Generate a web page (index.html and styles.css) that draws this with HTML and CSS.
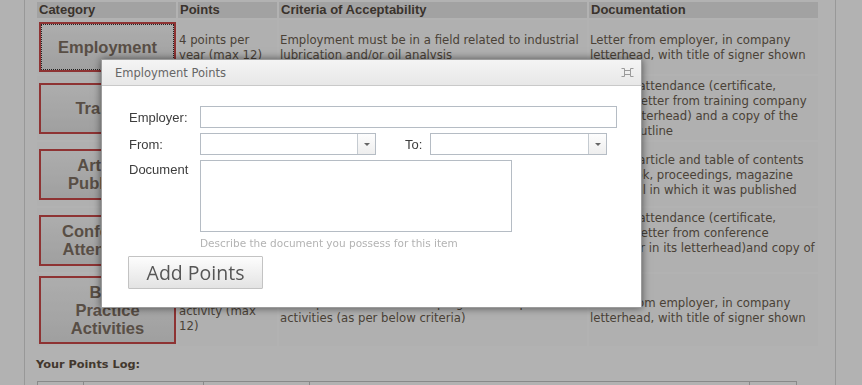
FILE: index.html
```html
<!DOCTYPE html>
<html lang="en">
<head>
    <meta charset="UTF-8">
    <meta name="viewport" content="width=device-width, initial-scale=1.0">
    <title>Certification Points</title>
    <link rel="stylesheet" href="styles.css">
</head>
<body>
    <div class="page">
        <table class="points">
            <tr>
                <th class="col-cat">Category</th>
                <th class="col-pts">Points</th>
                <th class="col-crit">Criteria of Acceptability</th>
                <th class="col-doc">Documentation</th>
            </tr>
            <tr>
                <td><button class="cat focused">Employment</button></td>
                <td>4 points per year (max 12)</td>
                <td>Employment must be in a field related to industrial lubrication and/or oil analysis</td>
                <td>Letter from employer, in company letterhead, with title of signer shown</td>
            </tr>
            <tr>
                <td><button class="cat">Training</button></td>
                <td>1 point per 8 hours (max 12)</td>
                <td>Training must be related to lubrication and/or oil analysis</td>
                <td>Proof of attendance (certificate,<br>original letter from training company<br>(in its letterhead) and a copy of the<br>course outline</td>
            </tr>
            <tr>
                <td><button class="cat">Articles Published</button></td>
                <td>2 points per article (max 8)</td>
                <td>Article must be related to lubrication and/or oil analysis and published in a recognized book, conference proceedings, magazine or technical journal</td>
                <td>Copy of article and table of contents<br>from book, proceedings, magazine<br>or journal in which it was published</td>
            </tr>
            <tr>
                <td><button class="cat">Conference Attendance</button></td>
                <td>1 point per day (max 8)</td>
                <td>Conference must be related to lubrication and/or oil analysis, or to machinery maintenance and reliability</td>
                <td>Proof of attendance (certificate,<br>original letter from conference<br>organizer in its letterhead)and copy of<br>agenda.</td>
            </tr>
            <tr>
                <td><button class="cat">Best Practice Activities</button></td>
                <td>2 points per activity (max 12)</td>
                <td>Participation in lubrication program best practice<br>activities (as per below criteria)</td>
                <td>Letter from employer, in company letterhead, with title of signer shown</td>
            </tr>
        </table>

        <h4 class="log-title">Your Points Log:</h4>
        <table class="log">
            <tr>
                <th class="log-n">#</th>
                <th class="log-cat">Category</th>
                <th class="log-date">Date</th>
                <th class="log-desc">Description</th>
                <th class="log-pts">Pts</th>
            </tr>
        </table>
    </div>

    <div class="mask"></div>

    <div class="dialog">
        <div class="dialog-head">
            <span class="dialog-title">Employment Points</span>
            <svg class="dialog-close" width="13" height="9" viewBox="0 0 13 9">
                <rect x="3.5" y="2.5" width="6" height="4" fill="none" stroke="#9a9a9a"/>
                <path d="M0.5 0.5h3v2 M12.5 0.5h-3v2 M0.5 8.5h3v-2 M12.5 8.5h-3v-2" fill="none" stroke="#9a9a9a"/>
            </svg>
        </div>
        <div class="dialog-body">
            <form class="points-form">
                <label for="employer">Employer:</label>
                <input type="text" id="employer" class="field employer">

                <label>From:</label>
                <div class="dates">
                    <div class="combo">
                        <input type="text" class="combo-input">
                        <span class="combo-trigger"></span>
                    </div>
                    <label class="to-label">To:</label>
                    <div class="combo combo-to">
                        <input type="text" class="combo-input">
                        <span class="combo-trigger"></span>
                    </div>
                </div>

                <label for="document" class="label-top">Document</label>
                <div>
                    <textarea id="document" class="field document"></textarea>
                    <div class="hint">Describe the document you possess for this item</div>
                </div>
            </form>
            <button type="button" class="add">Add Points</button>
        </div>
    </div>
</body>
</html>
```

FILE: styles.css
```css
body {
    margin: 0;
    background: #fff;
    font-family: "DejaVu Sans Condensed", "DejaVu Sans", sans-serif;
    font-size: 13px;
    color: #6b5e50;
}
.page {
    margin-left: 24px;
    width: 800px;
    min-height: 100vh;
    padding-left: 10px;
    border-left: 1px solid #dadada;
    border-right: 1px solid #dadada;
}

/* points table */
.points {
    border-collapse: separate;
    border-spacing: 2px;
    table-layout: fixed;
    width: 785px;
}
.points th {
    height: 16px;
    padding: 0 2px;
    background: #e9e9e9;
    color: #544a41;
    font-family: "Liberation Sans", Arial, sans-serif;
    font-size: 13px;
    text-align: left;
    line-height: 16px;
}
.col-cat { width: 139px; }
.col-pts { width: 99px; }
.col-crit { width: 308px; }
.col-doc { width: 229px; }
.points td {
    padding: 2px 0 2px 1px;
    background: #fcfcfc;
    line-height: 15px;
    vertical-align: middle;
}
.points th, .points td {
    box-sizing: border-box;
}
.points td:first-child {
    padding-left: 2px;
}
.cat {
    display: block;
    width: 100%;
    min-height: 51px;
    padding: 5px 16px;
    background: linear-gradient(#f8f8f8, #e5e5e5);
    border: 2px solid #cc4a4a;
    color: #7f7064;
    font-family: "Liberation Sans", Arial, sans-serif;
    font-size: 16.5px;
    font-weight: bold;
    line-height: 18px;
    cursor: pointer;
}
.focused {
    min-height: 50px;
    outline: 1px dotted #333;
    outline-offset: -3px;
}

/* log */
.log-title {
    margin: 10px 0 9px 1px;
    font-family: "DejaVu Sans", Verdana, sans-serif;
    font-size: 11.3px;
    line-height: 14px;
    color: #5f5143;
}
.log {
    margin-left: 2px;
    width: 760px;
    border-collapse: collapse;
    table-layout: fixed;
}
.log th {
    border: 1px solid #c4c4c4;
    padding: 10px 4px 4px;
    font-size: 12px;
    text-align: left;
}
.log-n { width: 37px; }
.log-cat { width: 111px; }
.log-date { width: 97px; }
.log-pts { width: 38px; }

/* modal */
.mask {
    position: fixed;
    top: 0;
    left: 0;
    right: 0;
    bottom: 0;
    background: rgba(0, 0, 0, 0.3);
}
.dialog {
    position: fixed;
    left: 101px;
    top: 59px;
    width: 541px;
    height: 249px;
    box-sizing: border-box;
    background: #fff;
    border: 1px solid #9c9c9c;
    box-shadow: 0 0 8px rgba(0, 0, 0, 0.55);
}
.dialog-head {
    display: flex;
    align-items: center;
    justify-content: space-between;
    height: 25px;
    padding: 0 7px 0 13px;
    background: linear-gradient(#f4f4f4, #e8e8e8);
    border-bottom: 1px solid #c9c9c9;
}
.dialog-title {
    font-family: "DejaVu Sans", Verdana, sans-serif;
    font-size: 11.5px;
    color: #666;
}
.dialog-body {
    padding: 20px 0 0 27px;
    font-family: "Liberation Sans", Arial, sans-serif;
}
.points-form {
    display: grid;
    grid-template-columns: 71px auto;
    row-gap: 5px;
    align-items: center;
}
.points-form label {
    color: #3d3d3d;
    font-size: 13px;
}
.points-form .label-top {
    align-self: start;
    padding-top: 2px;
}
.field {
    box-sizing: border-box;
    border: 1px solid #b5bcc4;
    font-family: inherit;
    margin: 0;
}
.employer {
    width: 417px;
    height: 22px;
}
.dates {
    display: flex;
    align-items: center;
}
.combo {
    display: flex;
    width: 176px;
    height: 22px;
    box-sizing: border-box;
    border: 1px solid #b5bcc4;
}
.combo-to {
    width: 177px;
}
.combo-input {
    flex: 1;
    min-width: 0;
    border: none;
    padding: 0;
}
.combo-trigger {
    position: relative;
    width: 17px;
    border-left: 1px solid #c5cbd1;
    background: linear-gradient(#fdfdfd, #eeeeee);
}
.combo-trigger::after {
    content: "";
    position: absolute;
    left: 6px;
    top: 9px;
    border-left: 3px solid transparent;
    border-right: 3px solid transparent;
    border-top: 3px solid #666;
}
.points-form .to-label {
    margin: 0 8px 0 29px;
}
.document {
    display: block;
    width: 312px;
    height: 72px;
    resize: none;
}
.hint {
    margin-top: 5px;
    font-family: "DejaVu Sans", Verdana, sans-serif;
    font-size: 10.5px;
    line-height: 12px;
    color: #b3b3b3;
}
.add {
    margin: 7px 0 0 -1px;
    width: 135px;
    height: 33px;
    padding: 0;
    background: linear-gradient(#fdfdfd, #e3e3e3);
    border: 1px solid #c3c3c3;
    border-radius: 1px;
    color: #555;
    font-family: "Open Sans", sans-serif;
    font-size: 19.5px;
    cursor: pointer;
}
```
